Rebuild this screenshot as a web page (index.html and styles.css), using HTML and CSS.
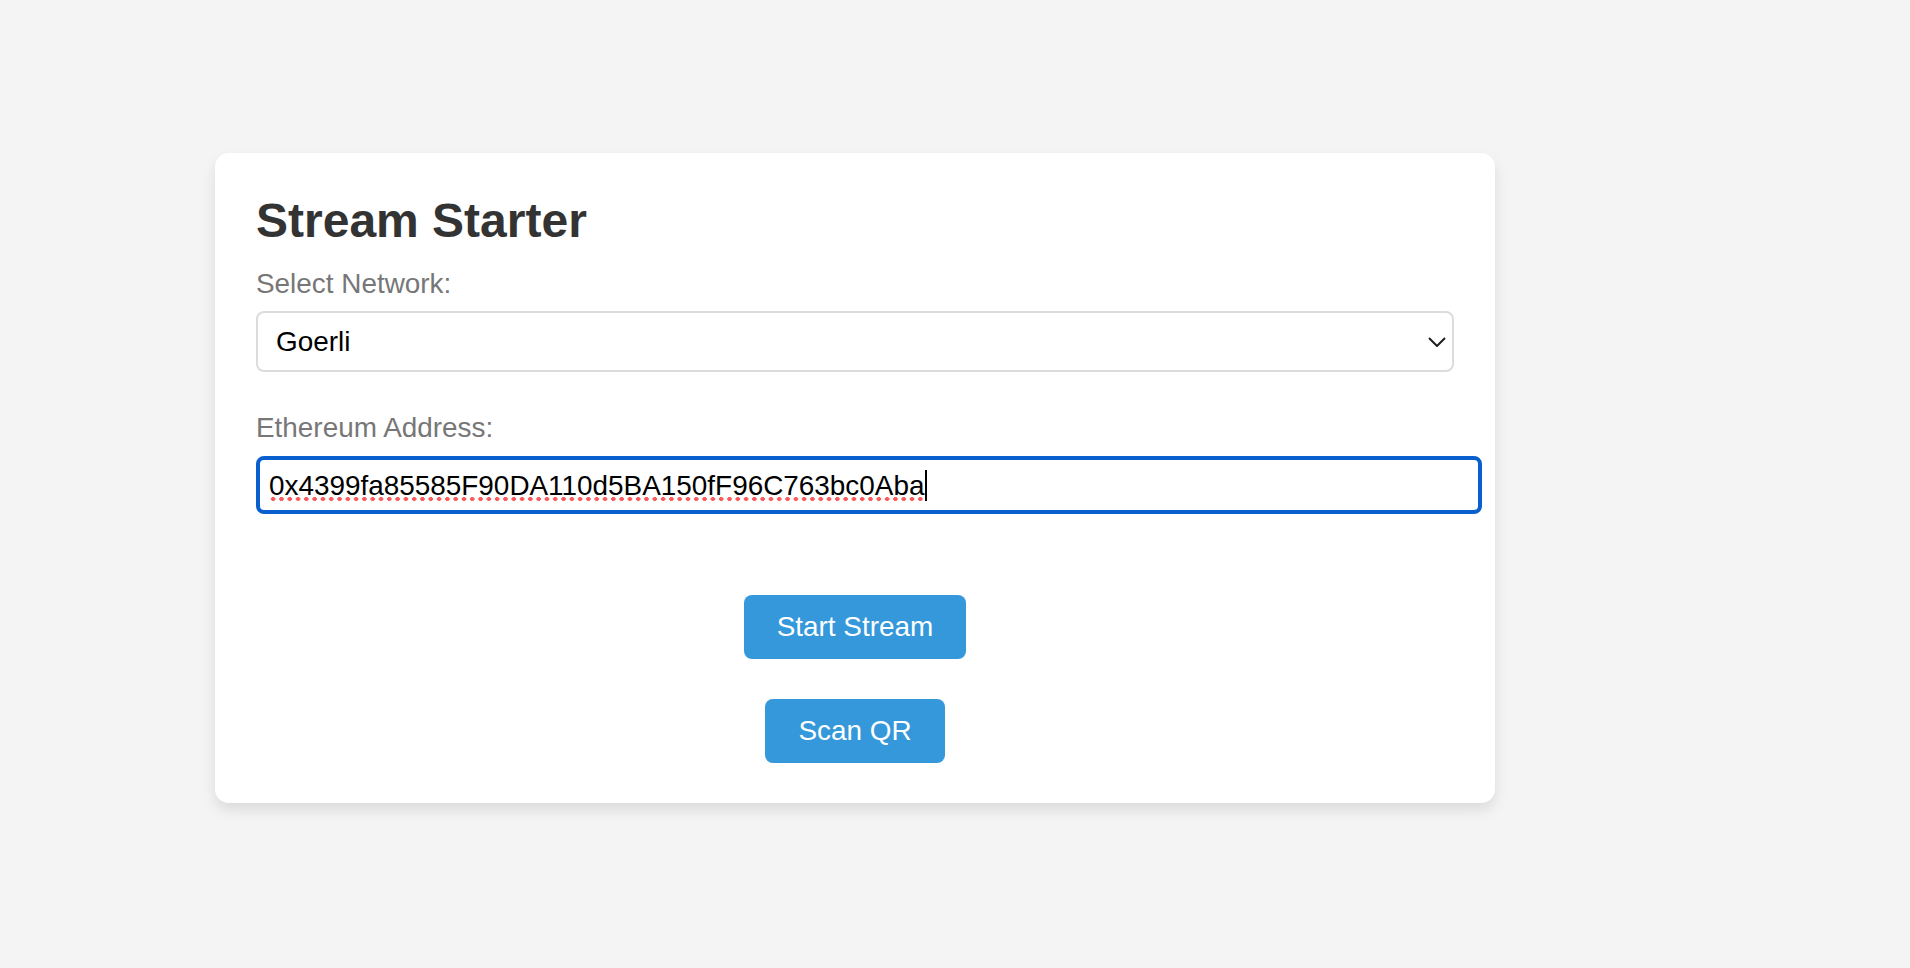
FILE: index.html
```html
<!DOCTYPE html>
<html lang="en">
<head>
<meta charset="utf-8">
<title>Stream Starter</title>
<link rel="stylesheet" href="styles.css">
</head>
<body>
<div class="card">
  <h1 class="title">Stream Starter</h1>
  <label class="label label-network">Select Network:</label>
  <div class="select">
    <span class="select-value">Goerli</span>
    <svg class="chevron" width="18" height="10" viewBox="0 0 18 10"><polyline points="1,1 9,9 17,1" fill="none" stroke="#1e1e1e" stroke-width="2"/></svg>
  </div>
  <label class="label label-address">Ethereum Address:</label>
  <div class="input">
    <span class="input-text">0x4399fa85585F90DA110d5BA150fF96C763bc0Aba</span><span class="caret"></span>
  </div>
  <div class="actions">
    <button class="btn">Start Stream</button>
    <button class="btn">Scan QR</button>
  </div>
</div>
</body>
</html>
```
FILE: styles.css
```css
html, body {
  margin: 0;
  padding: 0;
  background: #f4f4f4;
  font-family: "Liberation Sans", Arial, sans-serif;
}
body {
  height: 968px;
  overflow: hidden;
}
.card {
  box-sizing: border-box;
  width: 1280px;
  margin: 153px 0 0 215px;
  padding: 40px 41px 40px;
  background: #fff;
  border-radius: 14px;
  box-shadow: 0 7px 14px rgba(0, 0, 0, 0.1);
}
.title {
  margin: 0 0 20px;
  font-size: 48px;
  line-height: 55px;
  font-weight: bold;
  color: #333;
}
.label {
  display: block;
  font-size: 27.9px;
  line-height: 31px;
  color: #777;
}
.label-network {
  margin-bottom: 12px;
}
.label-address {
  margin-bottom: 13px;
}
.select {
  box-sizing: border-box;
  height: 61px;
  border: 2px solid #dcdcdc;
  border-radius: 8px;
  display: flex;
  align-items: center;
  justify-content: space-between;
  padding: 0 6px 0 18px;
  margin-bottom: 40px;
}
.select-value {
  font-size: 27.9px;
  color: #000;
}
.chevron {
  display: block;
}
.input {
  box-sizing: border-box;
  width: calc(100% + 28px);
  height: 58px;
  border: 4px solid #0a5fcf;
  border-radius: 8px;
  display: flex;
  align-items: center;
  padding: 0 9px;
}
.input-text {
  font-size: 27.9px;
  line-height: 31px;
  color: #000;
  background-image: radial-gradient(circle, #fa5c5c 1.9px, rgba(250, 92, 92, 0) 2.4px);
  background-repeat: repeat-x;
  background-size: 8.3px 6px;
  background-position: 0 26px;
}
.caret {
  display: inline-block;
  width: 2px;
  height: 31px;
  background: #000;
  margin-left: 1px;
}
.actions {
  display: flex;
  flex-direction: column;
  align-items: center;
  gap: 40px;
  margin-top: 81px;
}
.btn {
  height: 64px;
  padding: 0 33px;
  border: none;
  border-radius: 8px;
  background: #3498db;
  color: #fff;
  font-family: "Liberation Sans", Arial, sans-serif;
  font-size: 27.9px;
  cursor: pointer;
}
```
